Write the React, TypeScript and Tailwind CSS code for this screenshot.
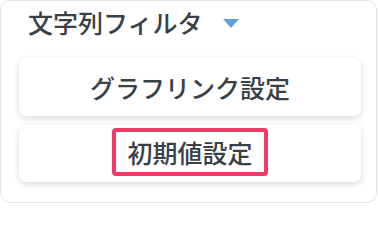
import React from 'react';

const font = { fontFamily: '"Noto Sans CJK JP", "Noto Sans", sans-serif' };

const App = () => {
  return (
    <div className="w-[378px] h-[204px] bg-white" style={font}>
      <div className="w-[377px] h-[203px] rounded-[10px] border border-[#e3e3e3] flex flex-col px-[18px]">
        {/* Header */}
        <div className="h-[57px] flex items-start pt-[6px] pl-[9px]">
          <span className="text-[25px] leading-[30px] font-medium text-[#384147]">文字列フィルタ</span>
          <svg className="ml-[20px] mt-[12px]" width="16" height="9" viewBox="0 0 16 9">
            <polygon points="0,0 16,0 8,9" fill="#5d9fe6" />
          </svg>
        </div>

        <div className="flex flex-col gap-[9px]">
          <button className="h-[58px] w-[342px] rounded-[7px] bg-white shadow-[0_2px_6px_rgba(0,0,0,0.16)] flex items-center justify-center">
            <span className="text-[25px] leading-[30px] font-medium text-[#384147]">グラフリンク設定</span>
          </button>
          <button className="h-[57px] w-[342px] rounded-[7px] bg-white shadow-[0_2px_6px_rgba(0,0,0,0.16)] flex items-center justify-center pb-[3px]">
            <span className="h-[48px] w-[156px] rounded-[4px] border-[4px] border-[#f03a68] flex items-center justify-center text-[25px] leading-[30px] font-medium text-[#384147]">
              初期値設定
            </span>
          </button>
        </div>
      </div>
    </div>
  );
};

export default App;
